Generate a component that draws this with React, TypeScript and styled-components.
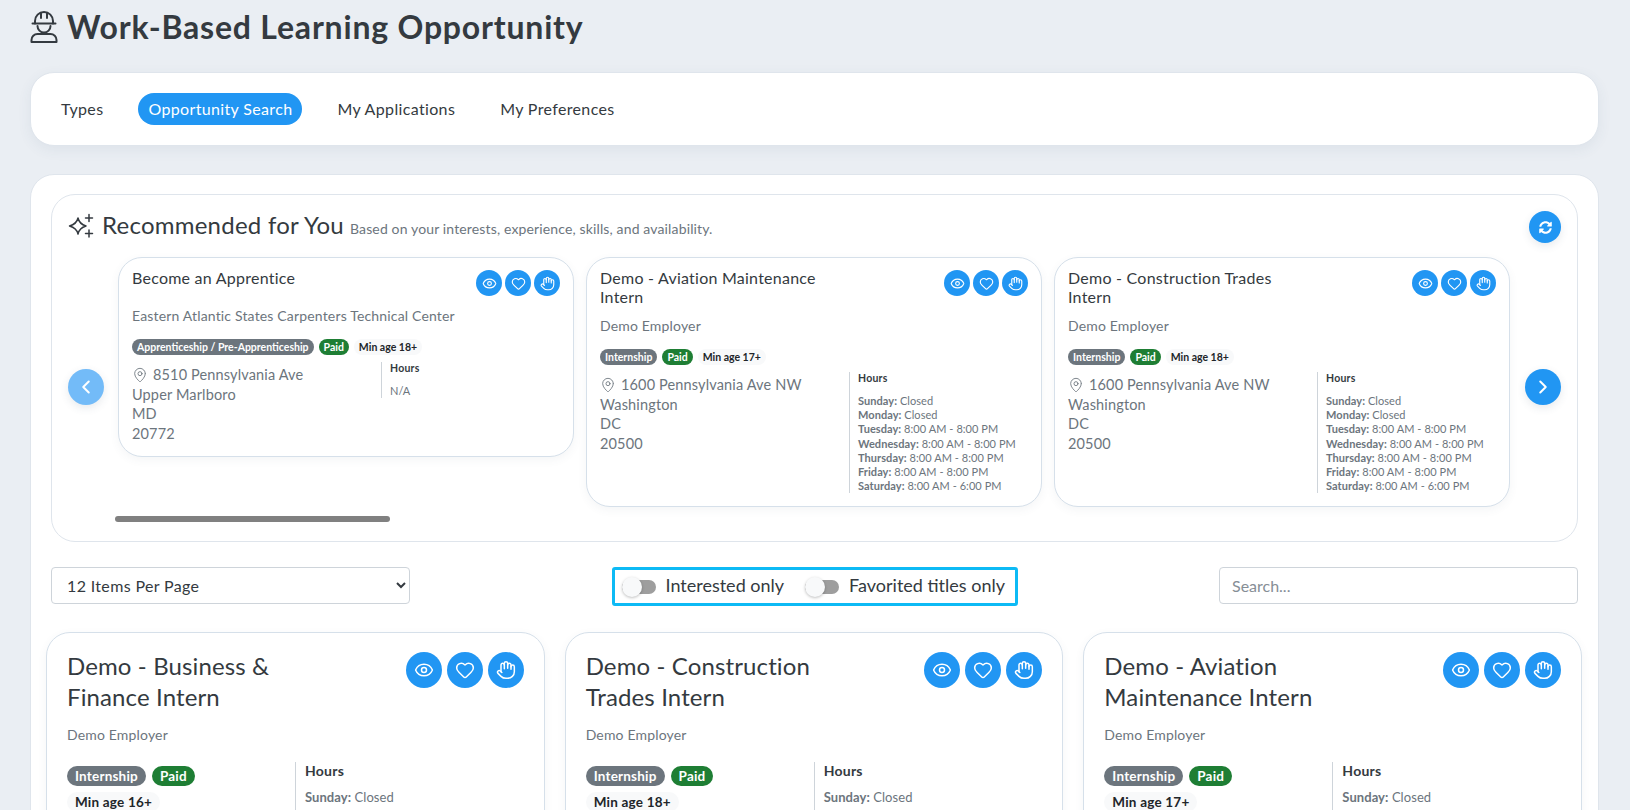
import React from 'react'
import styled, { createGlobalStyle } from 'styled-components'
import { Eye, Heart, Hand, MapPin, ChevronLeft, ChevronRight } from 'lucide-react'
import { FaSyncAlt } from 'react-icons/fa'

const FONT = `"Lato", "Noto Sans", sans-serif`

type Job = { title: string; org: string; kind: string; age: number; street: string; city: string; state: string; zip: string; hours: boolean }

const fullHours = [
    ["Sunday", "Closed"],
    ["Monday", "Closed"],
    ["Tuesday", "8:00 AM - 8:00 PM"],
    ["Wednesday", "8:00 AM - 8:00 PM"],
    ["Thursday", "8:00 AM - 8:00 PM"],
    ["Friday", "8:00 AM - 8:00 PM"],
    ["Saturday", "8:00 AM - 6:00 PM"],
]

const dc = { street: "1600 Pennsylvania Ave NW", city: "Washington", state: "DC", zip: "20500", hours: true }

const recommended: Job[] = [
    { title: "Become an Apprentice", org: "Eastern Atlantic States Carpenters Technical Center", kind: "Apprenticeship / Pre-Apprenticeship", age: 18, street: "8510 Pennsylvania Ave", city: "Upper Marlboro", state: "MD", zip: "20772", hours: false },
    { title: "Demo - Aviation Maintenance\nIntern", org: "Demo Employer", kind: "Internship", age: 17, ...dc },
    { title: "Demo - Construction Trades\nIntern", org: "Demo Employer", kind: "Internship", age: 18, ...dc },
]

const listing: Job[] = [
    { title: "Demo - Business &\nFinance Intern", org: "Demo Employer", kind: "Internship", age: 16, ...dc },
    { title: "Demo - Construction\nTrades Intern", org: "Demo Employer", kind: "Internship", age: 18, ...dc },
    { title: "Demo - Aviation\nMaintenance Intern", org: "Demo Employer", kind: "Internship", age: 17, ...dc },
]

const WorkerIcon = () => (
    <svg width="28" height="32" viewBox="0 0 28 32" fill="none" stroke="#343a40" strokeWidth="2" strokeLinecap="round" strokeLinejoin="round">
        <path d="M5 12.5V10a9 9 0 0 1 18 0v2.5" />
        <path d="M11 2.5V7M17 2.5V7" />
        <path d="M2.5 12.5h23" />
        <path d="M7.5 15a6.5 6.5 0 0 0 13 0" />
        <path d="M1.5 31v-2a6 6 0 0 1 6-6h13a6 6 0 0 1 6 6v2z" />
    </svg>
)

const SparkleIcon = () => (
    <svg width="26" height="26" viewBox="0 0 26 26" fill="none" stroke="#343a40" strokeWidth="1.5" strokeLinecap="round" strokeLinejoin="round">
        <path d="M10 5c1 4.500 3 6.500 8 8-5 1.500-7 3.500-8 8-1-4.500-3-6.500-8.500-8 5.500-1.500 7.500-3.500 8.500-8z" />
        <path d="M21 1.500v7M17.500 5h7" />
        <path d="M21 17v7M17.500 20.500h7" />
    </svg>
)

const Card = ({ job, big }: { job: Job; big?: boolean }) => {
    const badges = (
        <Badges $big={big}>
            <Badge $bg="#6c757d" $big={big}>{job.kind}</Badge>
            <Badge $bg="#1e7e34" $big={big}>Paid</Badge>
            <Badge $bg="#f8f9fa" $color="#212529" $big={big}>Min age {job.age}+</Badge>
        </Badges>
    )

    const address = (
        <Address $big={big}>
            <MapPin size={16} strokeWidth={1.3} />
            <span>{job.street}</span>
            <br />{job.city}
            <br />{job.state}
            <br />{job.zip}
        </Address>
    )

    return (
        <CardBox $big={big}>
            <CardHead>
                <CardTitle $big={big}>{job.title}</CardTitle>
                <Actions $big={big}>
                    <RoundButton $big={big}><Eye size={big ? 20 : 15} strokeWidth={1.8} /></RoundButton>
                    <RoundButton $big={big}><Heart size={big ? 20 : 15} strokeWidth={1.8} /></RoundButton>
                    <RoundButton $big={big}><Hand size={big ? 20 : 15} strokeWidth={1.8} /></RoundButton>
                </Actions>
            </CardHead>
            <Org $big={big}>{job.org}</Org>
            {!big && badges}
            <CardBody $big={big}>
                <LeftCol $big={big}>
                    {big && badges}
                    {address}
                </LeftCol>
                <HoursCol $big={big}>
                    <HoursTitle $big={big}>Hours</HoursTitle>
                    {job.hours
                        ? fullHours.map(([day, time]) => (
                            <HoursLine key={day} $big={big}><b>{day}:</b> {time}</HoursLine>
                        ))
                        : <HoursLine $big={big}>N/A</HoursLine>}
                </HoursCol>
            </CardBody>
        </CardBox>
    )
}

const App = () => {
    return (
        <Page>
            <GlobalStyle />
            <Heading>
                <WorkerIcon />
                <PageTitle>Work-Based Learning Opportunity</PageTitle>
            </Heading>

            <NavCard>
                <NavItem>Types</NavItem>
                <NavItem $active>Opportunity Search</NavItem>
                <NavItem>My Applications</NavItem>
                <NavItem>My Preferences</NavItem>
            </NavCard>

            <MainCard>
                <RecBox>
                    <RecHead>
                        <RecTitleRow>
                            <SparkleIcon />
                            <RecTitle>Recommended for You</RecTitle>
                            <RecSub>Based on your interests, experience, skills, and availability.</RecSub>
                        </RecTitleRow>
                        <RefreshButton><FaSyncAlt size={13} /></RefreshButton>
                    </RecHead>
                    <Carousel>
                        <ArrowButton $side="left" $faded><ChevronLeft size={22} strokeWidth={2.2} /></ArrowButton>
                        <CarouselRow>
                            {recommended.map((job) => <Card key={job.title} job={job} />)}
                        </CarouselRow>
                        <ArrowButton $side="right"><ChevronRight size={22} strokeWidth={2.2} /></ArrowButton>
                    </Carousel>
                    <ScrollThumb />
                </RecBox>

                <FilterRow>
                    <PageSelect defaultValue="12">
                        <option value="12">12 Items Per Page</option>
                        <option value="24">24 Items Per Page</option>
                    </PageSelect>
                    <ToggleBox>
                        <ToggleItem><Track><Knob /></Track><ToggleLabel>Interested only</ToggleLabel></ToggleItem>
                        <ToggleItem><Track><Knob /></Track><ToggleLabel>Favorited titles only</ToggleLabel></ToggleItem>
                    </ToggleBox>
                    <SearchInput placeholder="Search..." />
                </FilterRow>

                <CardGrid>
                    {listing.map((job) => <Card key={job.title} job={job} big />)}
                </CardGrid>
            </MainCard>
        </Page>
    )
}

export default App

const GlobalStyle = createGlobalStyle`
html, body {
    margin: 0;
    height: 810px;
    overflow: hidden;
    background: #eaeef3;
}
* {
    box-sizing: border-box;
}
`

const Page = styled.div`
padding: 8px 31px 0 30px;
font-family: ${FONT};
letter-spacing: 0.015em;
color: #343a40;
`

const Heading = styled.div`
display: flex;
align-items: center;
gap: 9px;
height: 38px;
`

const PageTitle = styled.h1`
margin: 0;
font-size: 32px;
font-weight: 700;
line-height: 38px;
letter-spacing: 0.025em;
color: #343a40;
`

const NavCard = styled.div`
display: flex;
align-items: center;
gap: 25px;
margin-top: 26px;
height: 74px;
padding: 0 20px;
background: white;
border: 1px solid #dfe5ec;
border-radius: 24px;
box-shadow: 0 4px 14px rgba(60, 80, 110, 0.07);
`

const NavItem = styled.div<{ $active?: boolean }>`
padding: 0 10px;
height: 32px;
line-height: 32px;
border-radius: 16px;
font-size: 16px;
letter-spacing: 0.022em;
background: ${({ $active }) => $active ? "#2196f3" : "transparent"};
color: ${({ $active }) => $active ? "white" : "#343a40"};
`

const MainCard = styled.div`
margin-top: 28px;
padding: 19px 20px 40px;
background: white;
border: 1px solid #dfe5ec;
border-radius: 24px;
`

const RecBox = styled.div`
border: 1px solid #dfe5ec;
border-radius: 24px;
padding: 16px 16px 17px;
height: 348px;
`

const RecHead = styled.div`
display: flex;
align-items: center;
justify-content: space-between;
height: 32px;
margin-bottom: 14px;
`

const RecTitleRow = styled.div`
display: flex;
align-items: baseline;
margin-bottom: 6px;

svg {
    align-self: center;
    margin-bottom: -4px;
}
`

const RecTitle = styled.span`
font-size: 24px;
margin-left: 8px;
color: #343a40;
`

const RecSub = styled.span`
font-size: 14px;
margin-left: 6px;
letter-spacing: 0.01em;
color: #6c757d;
`

const RefreshButton = styled.div`
display: flex;
align-items: center;
justify-content: center;
width: 32px;
height: 32px;
border-radius: 50%;
background: #2196f3;
color: white;
box-shadow: 0 3px 8px rgba(60, 80, 110, 0.12);
`

const Carousel = styled.div`
position: relative;
padding-left: 50px;
`

const CarouselRow = styled.div`
display: flex;
align-items: flex-start;
gap: 12px;
`

const ArrowButton = styled.div<{ $side: "left" | "right"; $faded?: boolean }>`
position: absolute;
top: 112px;
${({ $side }) => $side}: 0;
display: flex;
align-items: center;
justify-content: center;
width: 36px;
height: 36px;
border-radius: 50%;
color: white;
background: ${({ $faded }) => $faded ? "#73bbf8" : "#2196f3"};
box-shadow: 0 3px 8px rgba(60, 80, 110, 0.12);
`

const ScrollThumb = styled.div`
width: 275px;
height: 6px;
margin: 9px 0 0 47px;
border-radius: 3px;
background: #808080;
`

const CardBox = styled.div<{ $big?: boolean }>`
flex: 0 0 456px;
min-width: 0;
background: white;
border: 1px solid #d6e0ea;
border-radius: 24px;
padding: ${({ $big }) => $big ? "19px 20px" : "10px 13px 13px"};
box-shadow: 0 3px 10px rgba(60, 80, 110, 0.06);
`

const CardHead = styled.div`
display: flex;
align-items: flex-start;
justify-content: space-between;
`

const CardTitle = styled.div<{ $big?: boolean }>`
white-space: pre-line;
font-size: ${({ $big }) => $big ? "24px" : "16px"};
line-height: ${({ $big }) => $big ? "31px" : "19px"};
margin-top: ${({ $big }) => $big ? "-2px" : "0"};
letter-spacing: ${({ $big }) => $big ? "0.005em" : "0.015em"};
color: #343a40;
`

const Actions = styled.div<{ $big?: boolean }>`
display: flex;
gap: ${({ $big }) => $big ? "5px" : "3px"};
margin-top: ${({ $big }) => $big ? "0" : "2px"};
`

const RoundButton = styled.div<{ $big?: boolean }>`
display: flex;
align-items: center;
justify-content: center;
width: ${({ $big }) => $big ? "36px" : "26px"};
height: ${({ $big }) => $big ? "36px" : "26px"};
border-radius: 50%;
background: #2196f3;
color: white;
`

const Org = styled.div<{ $big?: boolean }>`
margin-top: ${({ $big }) => $big ? "13px" : "10px"};
font-size: 14px;
line-height: 20px;
letter-spacing: 0.012em;
color: #6c757d;
`

const Badges = styled.div<{ $big?: boolean }>`
display: flex;
flex-wrap: wrap;
align-items: center;
gap: ${({ $big }) => $big ? "6px" : "5px"};
margin-top: ${({ $big }) => $big ? "4px" : "13px"};
max-width: ${({ $big }) => $big ? "200px" : "none"};
`

const Badge = styled.span<{ $bg: string; $color?: string; $big?: boolean }>`
display: inline-block;
height: ${({ $big }) => $big ? "20px" : "16px"};
line-height: ${({ $big }) => $big ? "20px" : "16px"};
padding: 0 ${({ $big }) => $big ? "8px" : "5px"};
border-radius: 10px;
font-size: ${({ $big }) => $big ? "13.5px" : "10.5px"};
font-weight: 700;
letter-spacing: ${({ $big }) => $big ? "0.015em" : "0"};
white-space: nowrap;
background: ${({ $bg }) => $bg};
color: ${({ $color }) => $color || "white"};
`

const CardBody = styled.div<{ $big?: boolean }>`
display: flex;
align-items: flex-start;
margin-top: ${({ $big }) => $big ? "17px" : "7px"};
`

const LeftCol = styled.div<{ $big?: boolean }>`
flex: 0 0 ${({ $big }) => $big ? "228px" : "249px"};
`

const Address = styled.div<{ $big?: boolean }>`
margin-top: ${({ $big }) => $big ? "10px" : "3px"};
font-size: 14.5px;
line-height: 19.5px;
letter-spacing: 0.01em;
color: #6c757d;

svg {
    vertical-align: -3px;
    margin-right: 5px;
}
`

const HoursCol = styled.div<{ $big?: boolean }>`
border-left: 1px solid #ced4da;
padding-left: ${({ $big }) => $big ? "9px" : "8px"};
`

const HoursTitle = styled.div<{ $big?: boolean }>`
font-size: ${({ $big }) => $big ? "14px" : "10.5px"};
font-weight: 700;
line-height: 14px;
margin-top: ${({ $big }) => $big ? "2px" : "-1px"};
margin-bottom: ${({ $big }) => $big ? "10px" : "9px"};
color: #343a40;
`

const HoursLine = styled.div<{ $big?: boolean }>`
font-size: ${({ $big }) => $big ? "13px" : "11px"};
line-height: ${({ $big }) => $big ? "18px" : "14.200px"};
letter-spacing: 0.005em;
white-space: nowrap;
color: #6c757d;

b {
    font-weight: 700;
}
`

const FilterRow = styled.div`
display: flex;
align-items: flex-start;
justify-content: space-between;
margin-top: 25px;
`

const PageSelect = styled.select`
width: 359px;
height: 37px;
padding: 0 11px;
background: white;
border: 1px solid #ced4da;
border-radius: 4px;
font-family: ${FONT};
font-size: 16px;
letter-spacing: 0.022em;
color: #343a40;
`

const ToggleBox = styled.div`
display: flex;
align-items: center;
gap: 21px;
width: 406px;
height: 39px;
padding: 0 7px;
border: 3px solid #0dbaf5;
border-radius: 3px;
`

const ToggleItem = styled.div`
display: flex;
align-items: center;
gap: 10px;
white-space: nowrap;
`

const ToggleLabel = styled.span`
margin-top: -3px;
font-size: 18px;
letter-spacing: 0;
color: #343a40;
`

const Track = styled.div`
position: relative;
width: 34px;
height: 14px;
border-radius: 7px;
background: #9e9e9e;
`

const Knob = styled.div`
position: absolute;
left: 0;
top: -3px;
width: 20px;
height: 20px;
border-radius: 50%;
background: #f8f9fa;
box-shadow: 0 1px 3px rgba(0, 0, 0, 0.25);
`

const SearchInput = styled.input`
width: 359px;
height: 37px;
padding: 0 12px;
border: 1px solid #ced4da;
border-radius: 4px;
outline: none;
font-family: ${FONT};
font-size: 16px;

&::placeholder {
    color: #868e96;
}
`

const CardGrid = styled.div`
display: grid;
grid-template-columns: repeat(3, 1fr);
gap: 20px;
margin: 26px -4px 0 -5px;
`
